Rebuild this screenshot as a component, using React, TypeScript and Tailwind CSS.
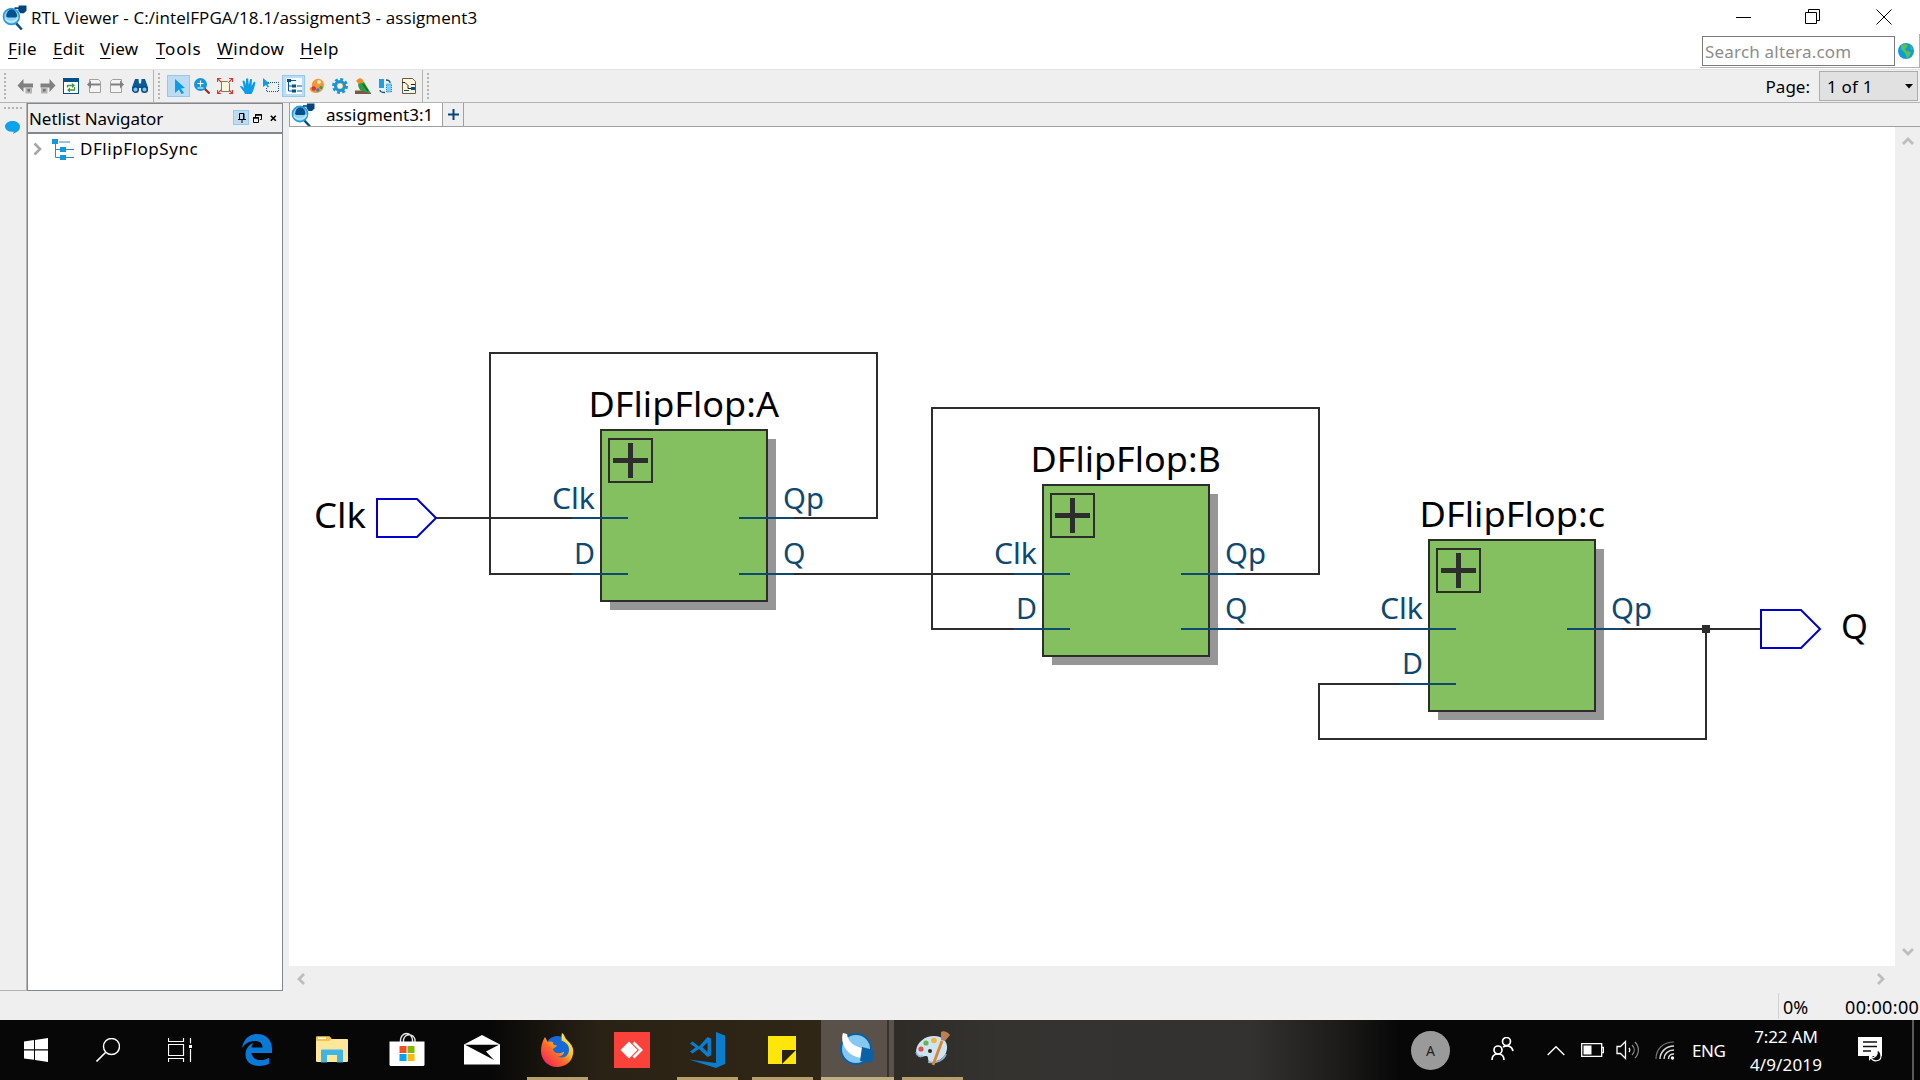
import React from "react";

type Kids = { children?: React.ReactNode };

function Ico({ w = 16, h = 16, vb, className = "", children }: Kids & { w?: number; h?: number; vb?: string; className?: string }) {
  return (
    <svg width={w} height={h} viewBox={vb ?? `0 0 ${w} ${h}`} className={"shrink-0 " + className} fill="none">
      {children}
    </svg>
  );
}

function ViewerLogo({ w = 24, h = 24 }: { w?: number; h?: number }) {
  return (
    <Ico w={w} h={h} vb="0 0 24 24">
      <path d="M13 17l6 6.500" stroke="#0b4a82" strokeWidth="2.400" />
      <circle cx="9" cy="11" r="7.600" fill="#8fd3f7" stroke="#2a9bd8" strokeWidth="1.600" />
      <path d="M4 11a5 6.500 0 0 1 10.500 0l-1.500 1H5.500z" fill="#04508c" />
      <path d="M3 13c2 4 9.500 4.500 12.500-1" stroke="#c8ecfd" strokeWidth="1.400" />
      <path d="M16 .5h7.500v5L21 8h-3.500L15.500 5z" fill="#04457f" />
      <path d="M12 3l5 0" stroke="#04457f" strokeWidth="1.600" />
    </Ico>
  );
}

function MenuItem({ label, className }: { label: string; className: string }) {
  return (
    <span className={className}>
      <span className="underline decoration-1 underline-offset-[3px]">{label[0]}</span>
      {label.slice(1)}
    </span>
  );
}

function Handle() {
  return (
    <svg width="3" height="28" viewBox="0 0 3 28" className="shrink-0">
      {[0, 4, 8, 12, 16, 20, 24].map((y) => (
        <rect key={y} x="0" y={y + 1} width="2" height="2" fill="#b4b4b4" />
      ))}
    </svg>
  );
}

function Cell({ active, children }: Kids & { active?: boolean }) {
  return (
    <div
      className={
        active
          ? "flex h-[22px] w-[23px] items-center justify-center border border-[#90c8f6] bg-[#bcdcf4]"
          : "flex h-[22px] w-[23px] items-center justify-center"
      }
    >
      {children}
    </div>
  );
}

function ToolbarA() {
  return (
    <div className="flex items-center">
      <Cell>
        <Ico>
          <path d="M.5 7.500l6-6.500v4.500H16v4H6.500V14z" fill="#808080" />
          <path d="M8.500 9h6.500v6.500H8.500z" fill="#b4b4b4" />
          <path d="M10.500 11h2.500v2.500h-2.500z" fill="#707070" />
        </Ico>
      </Cell>
      <Cell>
        <Ico>
          <path d="M15.500 7.500l-6-6.500v4.500H.5v4h9V14z" fill="#808080" />
          <path d="M1 9h6.500v6.500H1z" fill="#b4b4b4" />
          <path d="M3 11h2.500v2.500H3z" fill="#707070" />
        </Ico>
      </Cell>
      <Cell>
        <Ico>
          <rect x=".5" y=".5" width="15" height="15" fill="#fff" stroke="#04508c" />
          <rect width="16" height="4" fill="#04508c" />
          <path d="M4.500 9.500V7.500H10M11.500 9v3H6" stroke="#3d9b35" strokeWidth="1.300" />
          <path d="M9 5l3 2.500L9 10zM7 9.500L4 12l3 2.500z" fill="#3d9b35" />
        </Ico>
      </Cell>
      <Cell>
        <Ico>
          <path d="M3.500 4V1.500h9l2 2v11h-11V9" stroke="#a0a0a0" fill="#f4f4f4" />
          <path d="M1 6.500l4-4v3h9v2H5v3z" fill="#808080" />
        </Ico>
      </Cell>
      <Cell>
        <Ico>
          <path d="M12.500 4V1.500h-9l-2 2v11h11V9" stroke="#a0a0a0" fill="#f4f4f4" />
          <path d="M15 6.500l-4-4v3H2v2h9v3z" fill="#808080" />
        </Ico>
      </Cell>
      <Cell>
        <Ico>
          <path d="M3 1h3.500l.5 4.500h2L9.500 1H13l3 8.500V13h-6l-1-3H7l-1 3H0V9.500z" fill="#0b5a96" />
          <circle cx="3.500" cy="11.500" r="2.800" fill="#7cc4ea" stroke="#0b4a82" strokeWidth="1.400" />
          <circle cx="12.500" cy="11.500" r="2.800" fill="#7cc4ea" stroke="#0b4a82" strokeWidth="1.400" />
        </Ico>
      </Cell>
    </div>
  );
}

function ToolbarB() {
  return (
    <div className="flex items-center">
      <Cell active>
        <Ico>
          <path d="M4 1l10 9-4 .4 3 4.600-2.500 1L8 11.500 4 15z" fill="#0c9ce8" />
        </Ico>
      </Cell>
      <Cell>
        <Ico>
          <path d="M10.500 10.500l5 5" stroke="#9c2a22" strokeWidth="2.200" />
          <circle cx="6.500" cy="6.500" r="6.500" fill="#1296dc" />
          <path d="M3.500 5.500h6M6.500 2.500v6M3.500 10h6" stroke="#fff" strokeWidth="1.200" />
        </Ico>
      </Cell>
      <Cell>
        <Ico>
          <path d="M4.500 3.500h6l2 2v8h-8z" fill="#fdf6dd" stroke="#8a7a5c" />
          <path d="M.5 4V.5H4M12 .5h3.500V4M15.500 12v3.500H12M4 15.500H.5V12M.5.5l3.500 3.500M15.500.5L12 4M15.500 15.500L12 12M.5 15.500L4 12" stroke="#d43a35" strokeWidth="1.100" />
        </Ico>
      </Cell>
      <Cell>
        <Ico>
          <path d="M5 16C4 13 1 10.500 0 8.500c1-1 2.500 0 4 1.500L2.500 3c1-1 1.800-.5 2.200.6L6 7V1c.8-1 1.800-1 2.200 0L8.700 7l1.400-5.600c.9-.8 1.900-.4 1.900.7L11.500 8l2.200-4c1-.5 2 0 1.600 1.200C14.500 8.500 13.500 13 11.500 16z" fill="#0c9ce8" />
        </Ico>
      </Cell>
      <Cell>
        <Ico>
          <path d="M5 4.500h10.500v9h-12v-4" stroke="#0b5a96" strokeDasharray="1 1" />
          <path d="M0 0l7 6H4.500L6 9 4.500 9.500 3 7 0 9z" fill="#0c9ce8" />
        </Ico>
      </Cell>
      <Cell active>
        <Ico>
          <rect width="16" height="16" fill="#f4faff" />
          <path d="M2.500 3v10H7M2.500 8H7M4 2.500h6M11 8h5M11 13h5" stroke="#0b5a96" />
          <path d="M1 1h4v3H1zM6 6.500h4v3H6zM6 11.500h4v3H6z" fill="#04508c" />
        </Ico>
      </Cell>
      <Cell>
        <Ico>
          <path d="M1 9.500l2-.5C2 4 6 0 10.500 1 15 2 16 7 14 11s-8 5-11 3c-2-1.500-3-3-2-4.500z" fill="#f0983a" />
          <circle cx="10" cy="4" r="2" fill="#fbe4b0" />
          <circle cx="4.800" cy="10.500" r="2.200" fill="#d8352c" />
          <circle cx="8.800" cy="12" r="1.700" fill="#2f80cc" />
          <circle cx="12" cy="9.500" r="1.700" fill="#3f9f46" />
        </Ico>
      </Cell>
      <Cell>
        <Ico>
          <circle cx="8" cy="8" r="6.700" stroke="#1296dc" strokeWidth="2.600" strokeDasharray="2.900 2.360" />
          <circle cx="8" cy="8" r="4.600" stroke="#1296dc" strokeWidth="3" fill="#fdf3d6" />
          <circle cx="8" cy="8" r="3" stroke="#b98a4a" strokeWidth=".6" />
        </Ico>
      </Cell>
      <Cell>
        <Ico>
          <path d="M0 12.500h8l8 2.500v1H0z" fill="#7d5648" />
          <path d="M3.500 5l5.500-1 7 11.500-5-1.500-5.500-1.500C3.500 10 2.500 7 3.500 5z" fill="#2f9a3f" />
          <path d="M8 6l5 7" stroke="#17702a" strokeWidth="1.500" />
          <path d="M1 3l2-2c2-1.500 5-.5 5.500 3L4 6z" fill="#f08a2a" />
        </Ico>
      </Cell>
      <Cell>
        <Ico>
          <path d="M1 1h5v9H1z" fill="#1ba0e2" />
          <path d="M8.500 6h5v8h-5z" fill="#7fcdf2" stroke="#1b86c6" strokeDasharray="1 1" />
          <path d="M8 2c3 0 4 1 4 3M2 12c0 1.500 2 2.500 5 2.500" stroke="#0b5a96" strokeWidth="1.300" />
        </Ico>
      </Cell>
      <Cell>
        <Ico>
          <path d="M1.500.5h10l3 3v12h-13z" fill="#fdf6dd" stroke="#6b5b45" />
          <path d="M1 4.500h3l3 3v3h3M10 6.500h4" stroke="#222" />
          <path d="M10 9h4v3h-4z" fill="#04508c" />
          <path d="M3 12.500h5" stroke="#04508c" />
        </Ico>
      </Cell>
    </div>
  );
}

function Chevron({ dir }: { dir: "up" | "down" | "left" | "right" }) {
  const d = { up: "M2 10l5-5 5 5", down: "M2 4l5 5 5-5", left: "M9 2L4 7l5 5", right: "M5 2l5 5-5 5" }[dir];
  return (
    <Ico w={14} h={14}>
      <path d={d} stroke="#bdbdbd" strokeWidth="2.800" />
    </Ico>
  );
}

type Pin = { name: string; y: number; base: number; w: number };

function Block({ x, y, label, labelX, labelW, pins }: { x: number; y: number; label: string; labelX: number; labelW: number; pins: { left: Pin[]; right: Pin[] } }) {
  return (
    <g>
      <rect x={x + 9} y={y + 9} width="166" height="171" fill="#969696" />
      <rect x={x} y={y} width="166" height="171" fill="#84c060" stroke="#2d2d2d" strokeWidth="2" />
      <rect x={x + 8} y={y + 9} width="43" height="43" stroke="#2d2d2d" strokeWidth="2" />
      <path d={`M${x + 12} ${y + 30.5}h35M${x + 29.500} ${y + 13}v35`} stroke="#2d2d2d" strokeWidth="5" />
      <text x={labelX} y={y - 13} fontSize="34.500" fill="#000" lengthAdjust="spacingAndGlyphs" textLength={labelW}>{label}</text>
      {pins.left.map((p) => (
        <g key={p.name}>
          <path d={`M${x - 29} ${p.y}h56`} stroke="#0f4870" strokeWidth="2" />
          <text x={x - 6} y={p.base} fontSize="28.500" fill="#0f4870" textAnchor="end" lengthAdjust="spacingAndGlyphs" textLength={p.w}>{p.name}</text>
        </g>
      ))}
      {pins.right.map((p) => (
        <g key={p.name}>
          <path d={`M${x + 138} ${p.y}h55`} stroke="#0f4870" strokeWidth="2" />
          <text x={x + 182} y={p.base} fontSize="28.500" fill="#0f4870" lengthAdjust="spacingAndGlyphs" textLength={p.w}>{p.name}</text>
        </g>
      ))}
    </g>
  );
}

function Schematic() {
  return (
    <svg width="1606" height="839" viewBox="289 127 1606 839" fill="none" className="block font-['Noto_Sans',sans-serif]">
      <g stroke="#2d2d2d" strokeWidth="2">
        <path d="M436 518H602M768 518H877V353H490V574H602" />
        <path d="M768 574H1043M1210 574H1319V408H932V629H1043" />
        <path d="M1210 629H1430M1596 629H1761M1706 629V739H1319V684H1430" />
      </g>
      <rect x="1702" y="625" width="8" height="8" fill="#2d2d2d" />
      <Block x={601} y={430} label="DFlipFlop:A" labelX={588.5} labelW={190.5} pins={{
        left: [{ name: "Clk", y: 518, base: 509, w: 43 }, { name: "D", y: 574, base: 564, w: 21 }],
        right: [{ name: "Qp", y: 518, base: 509, w: 41 }, { name: "Q", y: 574, base: 564, w: 22.5 }],
      }} />
      <Block x={1043} y={485} label="DFlipFlop:B" labelX={1030.5} labelW={190.5} pins={{
        left: [{ name: "Clk", y: 574, base: 564, w: 43 }, { name: "D", y: 629, base: 619, w: 21 }],
        right: [{ name: "Qp", y: 574, base: 564, w: 41 }, { name: "Q", y: 629, base: 619, w: 22.5 }],
      }} />
      <Block x={1429} y={540} label="DFlipFlop:c" labelX={1419.5} labelW={185.5} pins={{
        left: [{ name: "Clk", y: 629, base: 619, w: 43 }, { name: "D", y: 684, base: 674, w: 21 }],
        right: [{ name: "Qp", y: 629, base: 619, w: 41 }],
      }} />
      <path d="M377 499H417L436 518L417 537H377Z" stroke="#0000c8" strokeWidth="2" />
      <path d="M1761 610H1801L1820 629L1801 648H1761Z" stroke="#0000c8" strokeWidth="2" />
      <text x="314" y="528" fontSize="34.500" fill="#000" lengthAdjust="spacingAndGlyphs" textLength="52">Clk</text>
      <text x="1841" y="639" fontSize="34.500" fill="#000">Q</text>
    </svg>
  );
}

function NavigatorPanel() {
  return (
    <div className="flex w-[256px] flex-col border border-[#828790] bg-white">
      <div className="flex h-[30px] shrink-0 items-center border-b-2 border-[#828790] bg-[#efefef] pl-[1px] pt-[1px]">
        <span className="w-[204px] text-[17px] tracking-[-0.050px] text-black">Netlist Navigator</span>
        <div className="mb-[2px] flex h-[15px] w-4 items-center justify-center border border-[#90c8f6] bg-[#bcdcf4]">
          <Ico w={10} h={11}><path d="M3.500 7V1.500H8V7M2 7.500h8M6 8v3M7.500 2v5" stroke="#000" /></Ico>
        </div>
        <Ico w={9} h={9} className="mb-[1px] ml-[4px]"><path d="M2.500 3V.5h6v5H7" stroke="#000" /><path d="M2 1h7M0 4h6" stroke="#000" strokeWidth="1.500" /><path d="M.5 3.500h5v5h-5z" stroke="#000" /></Ico>
        <Ico w={7} h={7} className="mb-[1px] ml-[8px]"><path d="M.8.8l5 5M5.800.8l-5 5" stroke="#000" strokeWidth="1.600" /></Ico>
      </div>
      <div className="flex h-[30px] items-center pl-[5px]">
        <Ico w={10} h={14}><path d="M1.500 1.500L7 7l-5.500 5.500" stroke="#a6a6a6" strokeWidth="2.600" /></Ico>
        <Ico w={22} h={21} className="ml-[9px]">
          <path d="M3.500 5v13.500H9M3.500 10.500H9M7 3h11M14 10.500h8M14 18.500h8" stroke="#3a86b4" />
          <path d="M0 0h6v5H0zM8 8h6v5H8zM8 16h6v5H8z" fill="#109ade" />
        </Ico>
        <span className="ml-[6px] text-[17px] tracking-[0.550px] text-black">DFlipFlopSync</span>
      </div>
    </div>
  );
}

function TaskSlot({ className, children }: Kids & { className: string }) {
  return <div className={"flex h-[60px] shrink-0 items-center justify-center pb-[1px] " + className}>{children}</div>;
}

function Taskbar() {
  return (
    <div className="flex h-[60px] shrink-0 items-stretch overflow-hidden bg-[linear-gradient(90deg,#070707_0px,#070707_490px,#2a2215_600px,#302616_820px,#2f2c28_900px,#343330_1000px,#333230_1250px,#1c1b1a_1340px,#070707_1400px,#070707_1920px)] text-white">
      <TaskSlot className="w-[72px]">
        <Ico w={24} h={24}><path d="M0 3.500L10 2v9.300H0zM11 1.900L24 0v11.300H11zM0 12.400h10v9.300L0 20.500zM11 12.400h13V24l-13-1.900z" fill="#fff" /></Ico>
      </TaskSlot>
      <TaskSlot className="w-[72px]">
        <Ico w={24} h={24}><circle cx="15.500" cy="8.500" r="8" stroke="#fff" strokeWidth="1.400" /><path d="M9.500 14.500L0.500 23.500" stroke="#fff" strokeWidth="1.600" /></Ico>
      </TaskSlot>
      <TaskSlot className="w-[72px]">
        <Ico w={24} h={24}><path d="M.5 0v3.500h15V0M.5 6.500h15v11H.5zM.5 24v-3.500h15V24M22.500 0v5.500M22.500 11v13" stroke="#fff" strokeWidth="1.200" /><path d="M21 7h3v3h-3z" fill="#fff" /></Ico>
      </TaskSlot>
      <TaskSlot className="w-[82px]">
        <Ico w={30} h={32}>
          <path d="M0 14C1.500 5.500 7 0 15 0c9 0 15 6 15 14.500V19H9.500c.5 4.500 4 7 9 7 3.300 0 6-.8 8.500-2.300v6.100C24 31.300 20.500 32 17 32 8.500 32 3.500 27 3.500 20.500 3.500 15 6.500 11 11.500 9 10.300 10.500 9.800 12 9.600 13.500H20.500C20.500 9.500 18 7 13 7 7.500 7 3 9.500 0 14z" fill="#0a78d7" />
        </Ico>
      </TaskSlot>
      <TaskSlot className="w-[68px]">
        <Ico w={32} h={28} className="mt-[1px]">
          <path d="M0 1.500Q0 .5 1 .5h12.500l2 2.500H31q1 0 1 1v21q0 1-1 1H1q-1 0-1-1z" fill="#fee69b" />
          <path d="M0 1.500Q0 .5 1 .5h12.500l2 2-2 2.500H0z" fill="#f6c443" />
          <path d="M2 1.500h8v1.500H2z" fill="#fff" />
          <path d="M5 26.500V14.500q0-1 1-1h20q1 0 1 1v12h-6v-7.500H11v7.500z" fill="#3fb5e5" />
        </Ico>
      </TaskSlot>
      <TaskSlot className="w-[81px]">
        <Ico w={36} h={34} className="mb-[2px]">
          <path d="M11.500 10V8a6 6.500 0 0 1 12 0v2M14.500 10V7.500a6 6.500 0 0 1 11.500 0V10" stroke="#e8e8e8" strokeWidth="1.400" />
          <path d="M.5 9.500h35v23q0 1.500-1.500 1.500H2Q.5 34 .5 32.500z" fill="#fff" />
          <path d="M10.500 14h7v7h-7z" fill="#f25022" /><path d="M18.500 14h7v7h-7z" fill="#7fba00" />
          <path d="M10.500 22h7v7h-7z" fill="#00a4ef" /><path d="M18.500 22h7v7h-7z" fill="#ffb900" />
        </Ico>
      </TaskSlot>
      <TaskSlot className="w-[70px]">
        <Ico w={36} h={30}><path d="M0 9.500L18 0l18 9.500V29.500H0z" fill="#fff" /><path d="M1 9.700h34L22 16.500l8 8.500z" fill="#070707" /></Ico>
      </TaskSlot>
      <TaskSlot className="w-[80px]">
        <Ico w={34} h={34}>
          <defs>
            <linearGradient id="ff" x1="30" y1="2" x2="4" y2="30" gradientUnits="userSpaceOnUse">
              <stop offset="0" stopColor="#fff44f" /><stop offset=".35" stopColor="#ffc21f" /><stop offset=".62" stopColor="#ff6a2a" /><stop offset="1" stopColor="#f2245c" />
            </linearGradient>
          </defs>
          <circle cx="17.500" cy="15.500" r="12.500" fill="#1669d8" />
          <path d="M22 0c3 2 2 4 5 7 5 5 7 8 6 14-1 8-8 13-16 13C8 34 1 27 1 18 1 13 2 9 5 4c1 2 2 3 2.500 5C10 8 12 9 13.500 9.500c-1 1-1 2.500 3.500 3-1 2-3.500 2-4 4 .5 4 7 5 11 2 0 4-4 5.500-7 5 7 3 12-1 12-7 0-5-3-7-7.500-9C22 5 21 3 22 0z" fill="url(#ff)" />
        </Ico>
      </TaskSlot>
      <TaskSlot className="w-[70px]">
        <Ico w={36} h={36}><path d="M0 0h36v36H0z" fill="#fa423a" /><path d="M6.500 18L15 9.500l8.500 8.500L15 26.500z" fill="#fff" /><path d="M19.500 10.500L27 18l-7.500 7.500" stroke="#fff" strokeWidth="2.800" /></Ico>
      </TaskSlot>
      <TaskSlot className="w-[80px]">
        <Ico w={36} h={36}><path d="M27 0l9 3.500v28.500L27 36 0 27.500l27 3.500z" fill="#0a7dcc" /><path d="M1 11.500l2.500-2 6.500 5L18.500 5l3.500 1.500v17L18.500 25l-8.500-8-6.500 4.500L1 19.500l5.500-4z" fill="#0a7dcc" /><path d="M18.500 10.500v9.500l-5-4.800z" fill="#2a2115" /></Ico>
      </TaskSlot>
      <TaskSlot className="w-[69px]">
        <Ico w={28} h={28} className="mt-[1px]"><path d="M0 0h28v28H0z" fill="#ffe60a" /><path d="M14 14h14L14 28z" fill="#2a2115" /></Ico>
      </TaskSlot>
      <TaskSlot className="ml-[5px] w-[73px] bg-[linear-gradient(90deg,#59514a_0_66px,#36322c_66px_68px,#59514a_68px)]">
        <Ico w={36} h={34} className="mb-[1px]">
          <circle cx="16" cy="17" r="15" fill="#85c8f2" stroke="#0b61a0" strokeWidth="2" />
          <path d="M3 1c-3 8 2 23 19 25l6-9C18 16 8 12 7 2z" fill="#fff" />
          <path d="M22 15l12 3v9l-4 4-10-2z" fill="#0a61a4" />
        </Ico>
      </TaskSlot>
      <TaskSlot className="w-[82px]">
        <Ico w={36} h={36} className="mb-[1px] ml-[-5px]">
          <path d="M1 20C2 11 10 5 19 5c9 0 14 6 13 13-1 8-8 13-16 13-5 0-1-6-5-6-3-.5-5 3-8 0-1-1-2-3-2-5z" fill="#cfe3f1" />
          <path d="M1 21c1 4 4 5 7 4M13 31c8 2 16-2 18-8" stroke="#8db4d0" strokeWidth="1.600" />
          <circle cx="11" cy="12" r="2.600" fill="#62b84a" /><circle cx="19" cy="9.500" r="2.800" fill="#f0b43c" />
          <circle cx="6" cy="18" r="2.600" fill="#d9534a" /><circle cx="15" cy="20" r="2" fill="#30271a" />
          <path d="M27 10L18 34" stroke="#d98535" strokeWidth="2.800" /><path d="M26 1c2-2 7 0 9 3l-5 6-4-1z" fill="#b98056" />
        </Ico>
      </TaskSlot>
      <div className="flex-1" />
      <div className="flex items-center">
        <div className="flex h-[39px] w-[39px] items-center justify-center rounded-full bg-[#9a9a9a] text-[14px] text-[#222]">A</div>
        <Ico w={23} h={24} className="mb-[2px] ml-[41px]"><circle cx="15.500" cy="4.500" r="4" stroke="#fff" strokeWidth="1.700" /><circle cx="7" cy="13" r="4" stroke="#fff" strokeWidth="1.700" /><path d="M1 23c0-4 2.500-6 6-6s6 2 6 6M12 10c4-2.500 9-1 10 4" stroke="#fff" strokeWidth="1.700" /></Ico>
        <Ico w={18} h={11} className="ml-[33px]"><path d="M.7 10L9 1.700 17.300 10" stroke="#fff" strokeWidth="1.400" /></Ico>
        <Ico w={23} h={14} className="ml-[16px]"><path d="M.7.700h20v12.600H.7zM21 4.500h1.500v5H21" stroke="#fff" strokeWidth="1.300" /><path d="M2.500 2.500h8v9h-8z" fill="#fff" /></Ico>
        <Ico w={23} h={20} className="ml-[12px]"><path d="M1 6.500h3.500l5-5v17l-5-5H1z" stroke="#fff" strokeWidth="1.300" /><path d="M13 8c1 1 1 3 0 4" stroke="#fff" strokeWidth="1.300" /><path d="M16 5c3 3 3 7 0 10M19 2c4.500 4.500 4.500 11.500 0 16" stroke="#888" strokeWidth="1.200" /></Ico>
        <Ico w={20} h={20} className="ml-[16px]"><path d="M1 19C1 9 8 2 19 2" stroke="#777" strokeWidth="1.200" /><path d="M5 19c0-7 6-13 14-13M9 19c0-5 4-9 10-9M13.500 19c0-3 2-5 5.500-5" stroke="#ddd" strokeWidth="1.400" /><circle cx="17.500" cy="18" r="1.700" fill="#fff" /></Ico>
        <span className="ml-[17px] mt-[1px] w-[36px] whitespace-nowrap text-[17px] tracking-[-0.400px]">ENG</span>
        <div className="ml-[18px] mt-[2px] flex w-[80px] flex-col items-center whitespace-nowrap text-[17px] leading-[28px]">
          <span className="tracking-[-0.100px]">7:22 AM</span>
          <span className="tracking-[0.150px]">4/9/2019</span>
        </div>
        <Ico w={26} h={26} className="ml-[32px]"><path d="M0 0h24v19H15l-4 5v-5H0z" fill="#fff" /><path d="M5 5h14M5 9.500h14M5 14h8" stroke="#111" strokeWidth="1.300" /><path d="M19 13c1 5-2 8-6 8 2 4 10 4 10-2 0-3-1-5-4-6z" fill="#0a0a0a" stroke="#fff" strokeWidth="1.200" /></Ico>
        <div className="ml-[28px] h-[60px] w-[2px] bg-[#5a5a5a]" />
        <div className="w-[6px]" />
      </div>
    </div>
  );
}

function RunningMarks() {
  return (
    <div className="absolute bottom-0 left-[527px] flex h-[3px]">
      <div className="w-[61px] bg-[#b5a06c]" />
      <div className="ml-[89px] w-[61px] bg-[#b5a06c]" />
      <div className="ml-[14px] w-[61px] bg-[#b5a06c]" />
      <div className="ml-[8px] w-[73px] bg-[#bfae7e]" />
      <div className="ml-[8px] w-[61px] bg-[#b5a06c]" />
    </div>
  );
}

export default function App() {
  return (
    <div className="relative flex h-[1080px] w-[1920px] flex-col overflow-hidden bg-[#efefef] font-['Noto_Sans',sans-serif]">
      <div className="flex h-[69px] shrink-0 bg-white">
        <div className="flex flex-1 flex-col">
          <div className="flex h-[33px] items-center pl-[2px] pt-[1px]">
            <ViewerLogo w={25} h={25} />
            <span className="ml-[4px] mt-[2px] whitespace-nowrap font-['Open_Sans',sans-serif] text-[17px] tracking-[0.100px] text-black">RTL Viewer - C:/intelFPGA/18.1/assigment3 - assigment3</span>
          </div>
          <div className="flex h-[32px] items-center whitespace-nowrap text-[17px] text-black">
            <MenuItem label="File" className="ml-[8px] w-[45px] tracking-[0.500px]" />
            <MenuItem label="Edit" className="w-[47px] tracking-[0.300px]" />
            <MenuItem label="View" className="w-[56px] tracking-[0.300px]" />
            <MenuItem label="Tools" className="w-[61px] tracking-[0.800px]" />
            <MenuItem label="Window" className="w-[83px] tracking-[0.500px]" />
            <MenuItem label="Help" className="w-[60px] tracking-[0.500px]" />
          </div>
        </div>
        <div className="flex w-[220px] flex-col">
          <div className="flex h-[34px] items-center">
            <Ico w={16} h={16} className="ml-[36px]"><path d="M0 8.500h15" stroke="#000" /></Ico>
            <Ico w={16} h={16} className="ml-[53px]"><path d="M.5 3.500h11v11H.5zM3.500 3V.5h11v11H12" stroke="#000" /></Ico>
            <Ico w={16} h={16} className="ml-[55px]"><path d="M.5.5l15 15M15.500.5l-15 15" stroke="#000" /></Ico>
          </div>
          <div className="flex h-[34px] items-center border-b border-r border-[#b4b4b4] pl-[2px]">
            <div className="flex h-[30px] w-[193px] items-center border border-[#7a7a7a] bg-white pl-[2px] pt-[2px] text-[17px] tracking-[0.200px] text-[#8c8c8c]">Search altera.com</div>
            <Ico w={16} h={16} className="ml-[3px]"><circle cx="8" cy="8" r="8" fill="#109ade" /><path d="M3 2l5-1 2 2-3 3 2 2 4 1-1 3-3 4-1-4-2-3-3-3zM12 2l3 4-2 1z" fill="#5cc04a" /></Ico>
          </div>
        </div>
      </div>

      <div className="flex h-[34px] shrink-0 items-center border-b border-t border-b-[#b4b4b4] border-t-[#e4e4e4] bg-[#efefef]">
        <div className="ml-[4px]"><Handle /></div>
        <div className="ml-[6px]"><ToolbarA /></div>
        <div className="ml-[2px] h-[33px] w-px bg-[#b4b4b4]" />
        <div className="ml-[4px]"><Handle /></div>
        <div className="ml-[6px]"><ToolbarB /></div>
        <div className="ml-[2px] h-[33px] w-px bg-[#b4b4b4]" />
        <div className="ml-[4px]"><Handle /></div>
        <div className="flex-1" />
        <span className="mr-[9px] mt-[1px] text-[17px] text-black">Page:</span>
        <div className="mr-[2px] flex h-[30px] w-[99px] items-center justify-between border border-[#adadad] bg-[#e1e1e1] pl-[7px] pr-[4px] pt-[1px] text-[17px] tracking-[0.200px] text-black">
          1 of 1
          <Ico w={8} h={5}><path d="M0 0h8L4 4.500z" fill="#000" /></Ico>
        </div>
      </div>

      <div className="flex h-[888px] shrink-0">
        <div className="flex w-[27px] flex-col border-b border-r border-[#b4b4b4]">
          <Ico w={20} h={3} className="ml-[4px] mt-[4px]"><path d="M0 1h20" stroke="#b4b4b4" strokeWidth="2" strokeDasharray="2 2" /></Ico>
          <Ico w={15} h={13} className="ml-[5px] mt-[11px]"><path d="M7.500 0C12 0 15 2.500 15 5.500c0 3-1.500 4.500-3.500 5.500L8 13l.8-2.200C3 11 0 8.500 0 5.500S3 0 7.500 0z" fill="#0ca2ec" /></Ico>
        </div>
        <NavigatorPanel />
        <div className="ml-[6px] flex flex-1 flex-col">
          <div className="flex h-[24px] shrink-0 border-b border-[#a0a0a0]">
            <div className="flex h-[24px] w-[154px] items-center overflow-hidden border-b border-l border-r border-[#a0a0a0] bg-white pl-[1px]">
              <ViewerLogo w={24} h={24} />
              <span className="ml-[11px] mt-[1px] whitespace-nowrap text-[17px] tracking-[0.050px] text-black">assigment3:1</span>
            </div>
            <div className="flex w-[21px] items-center justify-center border-r border-[#a0a0a0]">
              <Ico w={11} h={11}><path d="M0 5.500h11M5.500 0v11" stroke="#04457f" strokeWidth="2" /></Ico>
            </div>
          </div>
          <div className="flex h-[839px] shrink-0">
            <div className="w-[1606px] bg-white"><Schematic /></div>
            <div className="flex w-[25px] flex-col items-center justify-between py-[7px]">
              <Chevron dir="up" />
              <Chevron dir="down" />
            </div>
          </div>
          <div className="flex h-[25px] w-[1606px] items-center justify-between pl-[6px] pr-[8px]">
            <Chevron dir="left" />
            <Chevron dir="right" />
          </div>
        </div>
      </div>

      <div className="flex h-[29px] shrink-0 items-center text-[17px] text-black">
        <div className="flex-1" />
        <div className="mr-[4px] h-[26px] w-px bg-[#d2d2d2]" />
        <span className="mt-[3px] w-[62px] text-[18px]">0%</span>
        <span className="mt-[3px] w-[75px] whitespace-nowrap text-[18px] tracking-[0.350px]">00:00:00</span>
      </div>
      <Taskbar />
      <RunningMarks />
    </div>
  );
}
